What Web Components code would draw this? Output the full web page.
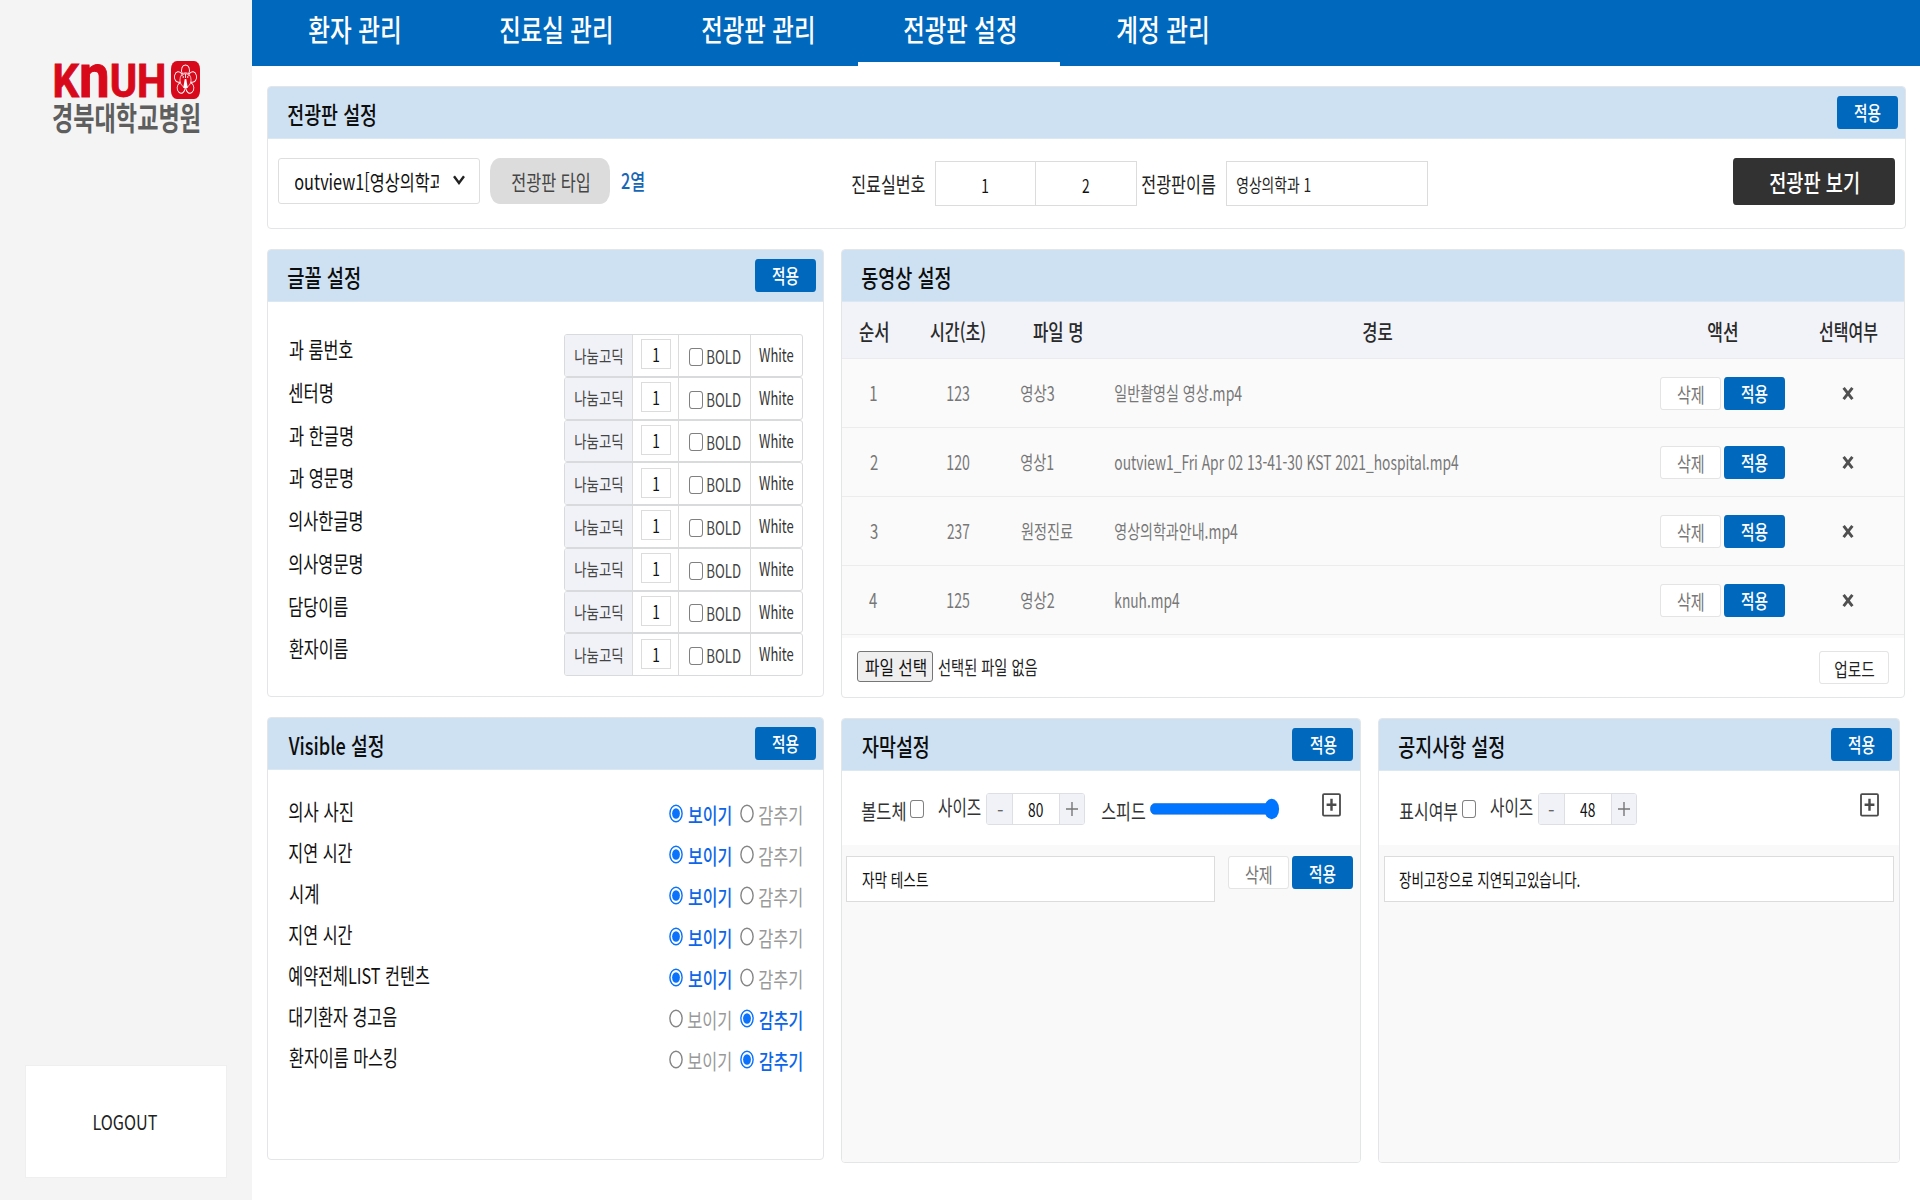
<!DOCTYPE html>
<html lang="ko">
<head>
<meta charset="utf-8">
<title>전광판 설정</title>
<style>
html,body{margin:0;padding:0;width:1920px;height:1200px;overflow:hidden;background:#fff}
body{font-family:"Noto Sans CJK KR","Noto Sans",sans-serif;color:#111}
</style>
</head>
<body>
<signage-app></signage-app>
<script>
const FONT='"Noto Sans CJK KR","Noto Sans",sans-serif';
const ctx=document.createElement('canvas').getContext('2d');
const BOX='*{box-sizing:border-box}';

/* Condensed label: s = font size, w = ink width, ml = left gap, dy = vertical nudge, wt = weight, c = colour */
class FitText extends HTMLElement{
  connectedCallback(){
    if(this.shadowRoot) return;
    const g=(n,d)=>this.hasAttribute(n)?this.getAttribute(n):d;
    const s=+g('s',21), wt=g('wt','400'), text=this.textContent.trim();
    ctx.font=`${wt} ${s}px ${FONT}`;
    const m=ctx.measureText(text);
    const ink=m.actualBoundingBoxLeft+m.actualBoundingBoxRight;
    const w=this.hasAttribute('w')?+g('w')*0.988:ink*0.765;
    const k=w/ink, off=m.actualBoundingBoxLeft*k;
    const c=g('c','');
    this.attachShadow({mode:'open'}).innerHTML=`<style>
      :host{display:block;flex:none;width:${w}px;height:${s}px;margin-left:${g('ml',0)}px;font:${wt} ${s}px/${s}px ${FONT};${c?'color:'+c:''}}
      span{display:inline-block;white-space:nowrap;transform-origin:0 50%;transform:translate(${off}px,${g('dy',0)}px) scaleX(${k})}
    </style><span><slot></slot></span>`;
  }
}

function define(name,render){
  customElements.define(name,class extends HTMLElement{
    connectedCallback(){
      if(this.shadowRoot) return;
      const a=(n,d='')=>this.hasAttribute(n)?this.getAttribute(n):d;
      this.attachShadow({mode:'open'}).innerHTML=render(a,this);
    }
  });
}
customElements.define('fit-text',FitText);

define('hospital-logo',()=>`<style>:host{display:block;width:152px;height:112px}svg{display:block;overflow:visible}</style>
<svg width="152" height="112" viewBox="50 30 152 112">
  <text x="52.5" y="96.5" fill="#d8091a" stroke="#d8091a" stroke-width=".9" font-family="Roboto,sans-serif" font-weight="700" font-size="47" textLength="114" lengthAdjust="spacingAndGlyphs">K<tspan font-size="62">n</tspan>UH</text>
  <rect x="171" y="61" width="29" height="38" rx="6" ry="8" fill="#d8091a"/>
  <g transform="translate(185.5 80) scale(.76 1)" fill="none" stroke="#fff" stroke-width="1.1">
    <path d="M-4 -6C-7 -11 -4 -15 0 -15S7 -11 4 -6"/>
    <path d="M-4 -6C-7 -11 -4 -15 0 -15S7 -11 4 -6" transform="rotate(72)"/>
    <path d="M-4 -6C-7 -11 -4 -15 0 -15S7 -11 4 -6" transform="rotate(144)"/>
    <path d="M-4 -6C-7 -11 -4 -15 0 -15S7 -11 4 -6" transform="rotate(216)"/>
    <path d="M-4 -6C-7 -11 -4 -15 0 -15S7 -11 4 -6" transform="rotate(288)"/>
    <circle r="7.3" stroke-width=".8"/>
    <path d="M-5 -4C-3 -7 3 -7 5 -4M0 -6V-2M-3 -4V-2M3 -4V-2" stroke-width="1"/>
    <path d="M-1 -1L-3 8H3L1 -1Z" fill="#fff" stroke="none"/>
  </g>
  <text x="52" y="130.2" fill="#5e5e5e" font-family="Noto Sans CJK KR,sans-serif" font-weight="700" font-size="32" textLength="149" lengthAdjust="spacingAndGlyphs">경북대학교병원</text>
</svg>`);

define('side-bar',()=>`<style>${BOX}
:host{display:flex;flex:none;flex-direction:column;justify-content:space-between;width:252px;height:1200px;background:#f4f4f4;padding:30px 26px 23.5px;box-sizing:border-box}
hospital-logo{margin-left:24px}
.out{width:200px;height:110.5px;background:#fff;display:flex;align-items:center;justify-content:center;box-shadow:0 0 0 1px #efefef}
</style><hospital-logo></hospital-logo><div class="out"><fit-text s="20.5" w="64" c="#222" dy="-.5">LOGOUT</fit-text></div>`);

define('nav-tab',a=>`<style>
:host{display:flex;width:202px;height:66px;box-sizing:border-box;justify-content:center;padding-top:15px;border-bottom:4px solid ${a('on')?'#fff':'transparent'};color:#fff}
</style><fit-text s="29.5" w="${a('w')}" wt="450" dy="-1">${a('label')}</fit-text>`);

define('top-nav',()=>`<style>:host{display:flex;height:66px;background:#0068bd}</style>
<nav-tab label="환자 관리" w="90"></nav-tab><nav-tab label="진료실 관리" w="111"></nav-tab><nav-tab label="전광판 관리" w="111"></nav-tab><nav-tab label="전광판 설정" w="111" on="1"></nav-tab><nav-tab label="계정 관리" w="90"></nav-tab>`);

define('ui-button',a=>{
  const k=a('kind','blue');
  const st={blue:'background:#0068bd;color:#fff',plain:'background:#fff;border:1.5px solid #e4e4e4;color:#777',dark:'background:#323232;color:#fff'}[k];
  return `<style>:host{display:flex;flex:none;align-items:center;justify-content:center;box-sizing:border-box;border-radius:3px/4px;width:${a('bw','61')}px;height:${a('bh','33')}px;${st}}</style>
  <fit-text s="${a('s','20')}" w="${a('w','27')}" wt="${a('wt',k==='plain'?'400':'500')}" dy="${a('dy','0')}" ${a('c')?`c="${a('c')}"`:''}>${a('label')}</fit-text>`;
});

define('ui-panel',a=>`<style>${BOX}
:host{display:flex;flex:none;flex-direction:column;box-sizing:border-box;width:${a('pw')}px;height:${a('ph')}px;border:1.5px solid #e4e5e7;border-radius:4px;background:#fff;overflow:hidden}
header{flex:none;height:53px;margin:-1px -1px 0;background:#cde1f2;border-top:1px solid #d6e0e8;border-bottom:1px solid #dbe7f1;display:flex;align-items:center;justify-content:space-between;padding:0 ${a('br','8')}px 0 21px}
ui-button{margin-top:-1px}
.body{flex:1;min-height:0;display:flex;flex-direction:column}
</style><header><fit-text s="24" w="${a('tw')}" wt="500" c="#0d0d0d" dy=".5">${a('label')}</fit-text>${a('noapply')?'':'<ui-button label="적용" dy=".5"></ui-button>'}</header><div class="body"><slot></slot></div>`);

define('check-box',a=>`<style>:host{display:block;flex:none;box-sizing:border-box;width:13.5px;height:18px;border:1.4px solid #808080;border-radius:3px/4px;background:#fff;margin-left:${a('ml','0')}px;margin-top:${a('mt','0')}px}</style>`);

define('text-box',a=>`<style>:host{display:flex;flex:none;align-items:center;box-sizing:border-box;width:${a('bw')}px;height:${a('bh','45')}px;margin-left:${a('ml','0')}px;border:1.5px solid #dcdcdc;background:#fff;padding-left:${a('pl','0')}px;justify-content:${a('pl')?'flex-start':'center'}}</style><slot></slot>`);

define('board-form',()=>`<style>${BOX}
:host{display:flex;align-items:flex-start;padding:19px 10px 0 10px}
.sel{display:flex;align-items:center;flex:none;width:201.5px;height:46px;border:1.5px solid #dedede;border-radius:3px;padding-left:15.5px}
.clip{width:144px;overflow:hidden;height:34px;display:flex;align-items:center}
.pill{display:flex;align-items:center;justify-content:center;width:120px;height:46px;margin-left:10.5px;border-radius:10px/13px;background:#dcdcdc}
.two{display:flex;height:47px;align-items:center}
.mid{display:flex;align-items:center;margin-left:207.5px;height:45px;margin-top:3px}
text-box+text-box{border-left:0}
.v{margin-left:auto}
</style>
<div class="sel"><div class="clip"><fit-text s="21" w="155.5" c="#111" dy="-.5">outview1[영상의학과]</fit-text></div><svg width="12" height="10" viewBox="0 0 12 10" style="margin-left:14px;margin-top:-3px"><path d="M1 1.2L6 8L11 1.2" fill="none" stroke="#222" stroke-width="2.4"/></svg></div>
<div class="pill"><fit-text s="21" w="77" c="#454545" dy="0">전광판 타입</fit-text></div>
<div class="two"><fit-text s="21" w="23.5" ml="11" wt="500" c="#1766b6" dy="-1">2열</fit-text></div>
<div class="mid"><fit-text s="21" w="74" c="#222">진료실번호</fit-text><text-box bw="101" ml="9.5"><fit-text s="18" dy="1" c="#111">1</fit-text></text-box><text-box bw="101"><fit-text s="18" dy="1" c="#111">2</fit-text></text-box><fit-text s="21" w="74.5" ml="5.5" c="#222">전광판이름</fit-text><text-box bw="202" ml="10" pl="10"><fit-text s="18" w="73.5" c="#222" dy="-.5">영상의학과 1</fit-text></text-box></div>
<ui-button class="v" kind="dark" bw="162" bh="47" s="24" w="88.5" label="전광판 보기"></ui-button>`);

define('font-row',a=>`<style>${BOX}
:host{display:flex;flex:none;height:42.75px;padding-left:20.5px;align-items:flex-start;justify-content:space-between;width:535px}
.lb{padding-top:4px}
.grp{display:flex;width:239.5px;height:42.75px;border:1.5px solid #d9dadc;border-radius:3px;overflow:hidden}
.grp>div{display:flex;align-items:center;justify-content:center;border-right:1px solid #dcdcdc}
.n{width:68px;background:#f1f2f7}.i{width:46.5px}.b{width:71.5px}.grp>.w{flex:1;border-right:0}
text-box{margin-top:-2px}
</style><div class="lb"><fit-text s="21.5" w="${a('w')}" c="#111">${a('label')}</fit-text></div>
<div class="grp"><div class="n"><fit-text s="17.5" w="47.5" c="#444" dy="-.5">나눔고딕</fit-text></div><div class="i"><text-box bw="30" bh="30"><fit-text s="18" c="#111">1</fit-text></text-box></div><div class="b"><check-box mt="3"></check-box><fit-text s="18.5" w="34" ml="4" c="#444" dy=".5">BOLD</fit-text></div><div class="w"><fit-text s="18.5" w="35" c="#333" dy="-1">White</fit-text></div></div>`);

define('radio-opt',a=>{const on=a('on')==='1';return `<style>
:host{display:flex;flex:none;align-items:center;margin-left:${a('ml','0')}px}svg{display:block;flex:none;margin-top:-3px}
</style><svg width="14" height="19" viewBox="0 0 14 19"><ellipse cx="7" cy="9.5" rx="6.1" ry="8.2" fill="#fff" stroke="${on?'#0a72fb':'#858585'}" stroke-width="1.4"/>${on?'<ellipse cx="7" cy="9.5" rx="3.9" ry="5.3" fill="#0a72fb"/>':''}</svg>
<fit-text s="21" w="43" ml="5.5" wt="${on?'500':'400'}" c="${on?'#0d66e8':'#999'}">${a('label')}</fit-text>`});

define('visible-row',a=>{const h=a('hide')==='1';return `<style>${BOX}
:host{display:flex;flex:none;width:533.5px;height:41px;padding-left:20.5px;align-items:flex-start;justify-content:space-between}
.r{display:flex;margin-top:4px}
</style><fit-text s="21.5" w="${a('w')}" c="#111">${a('label')}</fit-text><div class="r"><radio-opt label="보이기" on="${h?0:1}"></radio-opt><radio-opt label="감추기" ml="9" on="${h?1:0}"></radio-opt></div>`});

define('video-row',a=>`<style>${BOX}
:host{display:flex;flex:none;height:69px;box-sizing:border-box;background:#fafafa;border-bottom:1.5px solid #ececec;align-items:center;color:#777}
div{display:flex;flex:none;align-items:center;justify-content:center}
.a{width:63px}.b{width:106px}.c{width:92px;justify-content:flex-start;padding-left:10px}.d{width:550px;justify-content:flex-start;padding-left:12.5px}.e{width:139px;gap:3px}.f{width:112px}
</style><div class="a"><fit-text s="19.5" dy="0">${a('n')}</fit-text></div><div class="b"><fit-text s="19.5" w="22.5" dy="0">${a('t')}</fit-text></div><div class="c"><fit-text s="19.5" w="${a('fw')}" dy="0">${a('f')}</fit-text></div><div class="d"><fit-text s="19.5" w="${a('pw')}" dy="0">${a('p')}</fit-text></div><div class="e"><ui-button kind="plain" label="삭제" dy="2"></ui-button><ui-button label="적용" dy="1"></ui-button></div><div class="f"><svg width="12" height="15" viewBox="0 0 12 15"><path d="M1.6 1.8L10.4 13.2M10.4 1.8L1.6 13.2" stroke="#505050" stroke-width="2.9"/></svg></div>`);

define('video-table',()=>`<style>${BOX}
:host{display:flex;flex-direction:column;height:100%}
.h{display:flex;flex:none;height:57px;background:#f1f3f8;border-bottom:1.5px solid #ebebee;align-items:center;color:#2a2a2a}
.h div{display:flex;flex:none;justify-content:center}
.a{width:63px}.b{width:106px}.c{width:92px}.d{width:550px}.e{width:139px}.f{width:112px}
.up{display:flex;flex:1;align-items:flex-start;border-top:3px solid #fafafa;padding:13px 15px 0}
.fb{display:flex;align-items:center;justify-content:center;width:76.5px;height:31px;border:1.4px solid #767676;border-radius:3px;background:#efefef}
.no{display:flex;height:32px;align-items:center}
.u{margin-left:auto}
</style><div class="h"><div class="a"><fit-text s="21.5" w="29.5" wt="500" dy=".5">순서</fit-text></div><div class="b"><fit-text s="21.5" w="55.5" wt="500" dy=".5">시간(초)</fit-text></div><div class="c"><fit-text s="21.5" w="49" wt="500" dy=".5">파일 명</fit-text></div><div class="d"><fit-text s="21.5" w="29.5" wt="500" dy=".5">경로</fit-text></div><div class="e"><fit-text s="21.5" w="29.5" wt="500" dy=".5">액션</fit-text></div><div class="f"><fit-text s="21.5" w="59" wt="500" dy=".5">선택여부</fit-text></div></div>
<video-row n="1" t="123" f="영상3" fw="33.5" p="일반촬영실 영상.mp4" pw="128"></video-row>
<video-row n="2" t="120" f="영상1" fw="33" p="outview1_Fri Apr 02 13-41-30 KST 2021_hospital.mp4" pw="344"></video-row>
<video-row n="3" t="237" f="원정진료" fw="52" p="영상의학과안내.mp4" pw="124.5"></video-row>
<video-row n="4" t="125" f="영상2" fw="33.5" p="knuh.mp4" pw="65.5"></video-row>
<div class="up"><div class="fb"><fit-text s="19.5" w="60.5" c="#111">파일 선택</fit-text></div><div class="no"><fit-text s="19.5" w="98.5" ml="5" c="#222">선택된 파일 없음</fit-text></div><ui-button class="u" kind="plain" bw="70.5" s="19.5" w="39.5" c="#222" dy="1" label="업로드"></ui-button></div>`);

define('size-stepper',a=>`<style>${BOX}
:host{display:flex;flex:none;width:99px;height:32.5px;border:1.5px solid #dedfe3;border-radius:3px;margin-left:5px;box-sizing:border-box;overflow:hidden;color:#666}
div{display:flex;align-items:center;justify-content:center;background:#f1f2f7}
.s{width:24.5px}.v{flex:1;background:#fff;border:solid #dedfe3;border-width:0 1px;color:#111}
</style><div class="s"><fit-text s="19" w="6">-</fit-text></div><div class="v"><fit-text s="18" w="15.5" dy="0">${a('value')}</fit-text></div><div class="s"><svg width="12" height="16" viewBox="0 0 12 16"><path d="M6 1V15M0 8H12" stroke="#777" stroke-width="1.4" fill="none"/></svg></div>`);

define('range-slider',()=>`<style>:host{display:block;flex:none;margin-left:5px}svg{display:block}</style><svg width="130" height="22" viewBox="0 0 130 22"><rect x=".4" y="5.6" width="124" height="10.6" rx="4" ry="5.3" fill="#0075ff" stroke="#1468cf" stroke-width=".6"/><ellipse cx="121.7" cy="11" rx="7.4" ry="10.2" fill="#0075ff"/></svg>`);

define('add-icon',()=>`<style>:host{display:block;margin-left:auto;flex:none;margin-top:-8px}svg{display:block}</style><svg width="19" height="24" viewBox="0 0 19 24"><rect x="1" y="1.2" width="17" height="21.4" rx="1" fill="none" stroke="#4a4a4a" stroke-width="1.8"/><path d="M9.5 5.8V17.8M4.6 11.8H14.4" stroke="#4a4a4a" stroke-width="2.4"/></svg>`);

define('message-settings',a=>`<style>${BOX}
:host{display:flex;flex-direction:column;height:100%}
.ctl{display:flex;flex:none;height:74px;align-items:center;padding:2px 19.5px 0 20.5px}
.list{flex:1;background:#f9f9f9;display:flex;align-items:flex-start;padding:11px 7.5px 0 4.5px}
.btn{display:flex;gap:3px;margin-left:auto}
</style><div class="ctl"><fit-text s="21" w="${a('cw')}" c="#333" dy=".5">${a('check')}</fit-text><check-box ml="4.5"></check-box><fit-text s="21" w="43.5" ml="14.5" c="#333" dy="-3">사이즈</fit-text><size-stepper value="${a('value')}"></size-stepper>${a('speed')?'<fit-text s="21" w="44" ml="16.5" c="#333" dy=".5">스피드</fit-text><range-slider></range-slider>':''}<add-icon></add-icon></div>
<div class="list"><text-box bw="${a('iw')}" bh="46" pl="14.5"><fit-text s="18" w="${a('mw')}" dy="0" c="#111">${a('message')}</fit-text></text-box>${a('speed')?'<div class="btn"><ui-button kind="plain" label="삭제" dy="2"></ui-button><ui-button label="적용" dy="1"></ui-button></div>':''}</div>`);

define('signage-app',()=>{
  const fonts=[['과 룸번호',63.5],['센터명',44],['과 한글명',63.5],['과 영문명',63.5],['의사한글명',74],['의사영문명',74],['담당이름',59.5],['환자이름',59.5]];
  const vis=[['의사 사진',63.5,0],['지연 시간',63.5,0],['시계',29.5,0],['지연 시간',63.5,0],['예약전체LIST 컨텐츠',141,0],['대기환자 경고음',108,1],['환자이름 마스킹',108,1]];
  return `<style>${BOX}
:host{display:flex;width:1920px;height:1200px;background:#fff}
main{flex:1;display:flex;flex-direction:column;min-width:0}
.page{display:flex;flex-direction:column;gap:20px;padding:20px 0 0 15.4px}
.cols{display:flex;gap:17px}.col{display:flex;flex-direction:column;gap:20px}.pair{display:flex;gap:17px}
.fonts{padding-top:32px;display:flex;flex-direction:column}
.vis{padding-top:30px;display:flex;flex-direction:column}
</style><side-bar></side-bar><main><top-nav></top-nav><div class="page">
<ui-panel pw="1638.5" ph="143" label="전광판 설정" tw="87.5"><board-form></board-form></ui-panel>
<div class="cols"><div class="col">
<ui-panel pw="556.5" ph="448" label="글꼴 설정" tw="71.5"><div class="fonts">${fonts.map(f=>`<font-row label="${f[0]}" w="${f[1]}"></font-row>`).join('')}</div></ui-panel>
<ui-panel pw="556.5" ph="442.5" label="Visible 설정" tw="95"><div class="vis">${vis.map(v=>`<visible-row label="${v[0]}" w="${v[1]}" hide="${v[2]}"></visible-row>`).join('')}</div></ui-panel>
</div><div class="col">
<ui-panel pw="1064.5" ph="449" label="동영상 설정" tw="88" noapply="1"><video-table></video-table></ui-panel>
<div class="pair"><ui-panel pw="520.5" ph="445" label="자막설정" tw="67"><message-settings check="볼드체" cw="44" value="80" speed="1" iw="369" message="자막 테스트" mw="66"></message-settings></ui-panel>
<ui-panel pw="521.5" ph="445" label="공지사항 설정" tw="105"><message-settings check="표시여부" cw="58.5" value="48" iw="510" message="장비고장으로 지연되고있습니다." mw="182"></message-settings></ui-panel></div>
</div></div></div></main>`});
</script>
</body>
</html>
